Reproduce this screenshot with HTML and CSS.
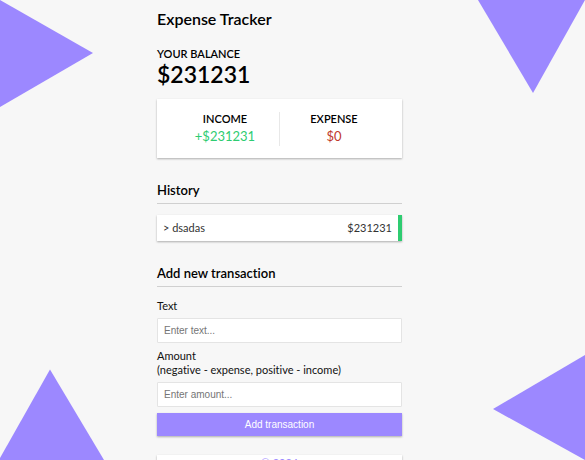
FILE: index.html
```html
<!DOCTYPE html>
<html lang="en">
<head>
<meta charset="utf-8">
<meta name="viewport" content="width=device-width, initial-scale=1">
<title>Expense Tracker</title>
<link rel="stylesheet" href="styles.css">
</head>
<body>
<svg class="corner top-left" viewBox="0 0 93 107" aria-hidden="true"><path d="M0 0L93 53L0 107Z"/></svg>
<svg class="corner top-right" viewBox="0 0 107 93" aria-hidden="true"><path d="M0 0H107L55 93Z"/></svg>
<svg class="corner bottom-left" viewBox="0 0 104 91" aria-hidden="true"><path d="M0 91V89L50 0.500L104 91Z"/></svg>
<svg class="corner bottom-right" viewBox="0 0 92 106" aria-hidden="true"><path d="M92 1L0 55L92 106Z"/></svg>
<main class="container">
  <h1 class="title">Expense Tracker</h1>
  <section class="balance">
    <h2 class="label">Your Balance</h2>
    <p class="total">$231231</p>
  </section>
  <section class="summary">
    <div class="summary-item">
      <h2 class="label">Income</h2>
      <p class="money plus">+$231231</p>
    </div>
    <div class="summary-item">
      <h2 class="label">Expense</h2>
      <p class="money minus">$0</p>
    </div>
  </section>
  <h2 class="heading">History</h2>
  <ul class="list">
    <li class="entry"><span>&gt; dsadas</span><span>$231231</span></li>
  </ul>
  <h2 class="heading">Add new transaction</h2>
  <form class="form">
    <label for="text">Text</label>
    <input class="field" type="text" id="text" placeholder="Enter text...">
    <label for="amount">Amount<br>(negative - expense, positive - income)</label>
    <input class="field" type="text" inputmode="numeric" id="amount" placeholder="Enter amount...">
    <button class="submit" type="submit">Add transaction</button>
  </form>
  <footer class="footer">© 2024</footer>
</main>
</body>
</html>
```
FILE: styles.css
```css
* { box-sizing: border-box; }

html { overflow: hidden; }

body {
  margin: 0;
  padding-right: 26px;
  height: 100vh;
  overflow: hidden;
  background: #f7f7f7;
  color: #111;
  font: 11px/14px Lato, sans-serif;
  font-variant-ligatures: none;
}

h1, h2, p, ul { margin: 0; padding: 0; }

.corner { position: absolute; z-index: -1; fill: #9c88ff; }
.top-left { top: 0; left: 0; width: 93px; }
.top-right { top: 0; right: 0; width: 107px; }
.bottom-left { bottom: 0; left: 0; width: 104px; }
.bottom-right { bottom: 0; right: 0; width: 92px; }

.container {
  max-width: 245px;
  margin: 0 auto;
  padding-top: 8px;
}

.title { font-size: 16px; line-height: 22px; font-weight: 600; color: #000; }

.balance { margin-top: 17px; }

.label {
  color: #000;
  font-size: 11px;
  line-height: 14px;
  font-weight: 600;
  text-transform: uppercase;
}

.total { color: #000; font-size: 23px; line-height: 26px; font-weight: 600; }

.summary {
  display: flex;
  margin-top: 12px;
  padding: 13px 14px 12px;
  background: #fff;
  box-shadow: 0 1px 2px rgba(0, 0, 0, 0.3);
}

.summary-item { flex: 1; text-align: center; }
.summary-item + .summary-item { border-left: 1px solid #e8e8e8; }

.money { font-size: 13px; line-height: 20px; }
.plus { color: #2ecc71; }
.minus { color: #c0392b; }

.heading {
  margin-top: 24px;
  padding-bottom: 5px;
  border-bottom: 1px solid #d0d0d0;
  color: #000;
  font-size: 13px;
  line-height: 16px;
  font-weight: 600;
}

.list { margin-top: 11px; list-style: none; }

.entry {
  display: flex;
  justify-content: space-between;
  padding: 6px;
  border-right: 4px solid #2ecc71;
  background: #fff;
  color: #333;
  box-shadow: 0 1px 2px rgba(0, 0, 0, 0.3);
}

.form { display: flex; flex-direction: column; margin-top: 12px; }

.field {
  width: 100%;
  height: 25px;
  margin: 5px 0 6px;
  padding: 0 6px;
  border: 1px solid #e4e4e4;
  border-radius: 1px;
  background: #fff;
  font: 10px "Liberation Sans", sans-serif;
}

.field::placeholder { color: #757575; opacity: 1; }

.submit {
  height: 23px;
  padding: 0;
  border: 0;
  background: #9c88ff;
  color: #fff;
  box-shadow: 0 1px 2px rgba(0, 0, 0, 0.3);
  font: 10px "Liberation Sans", sans-serif;
}

.footer {
  margin-top: 19px;
  padding: 1px;
  background: #fff;
  color: #9c88ff;
  text-align: center;
  box-shadow: 0 1px 2px rgba(0, 0, 0, 0.3);
}
```
